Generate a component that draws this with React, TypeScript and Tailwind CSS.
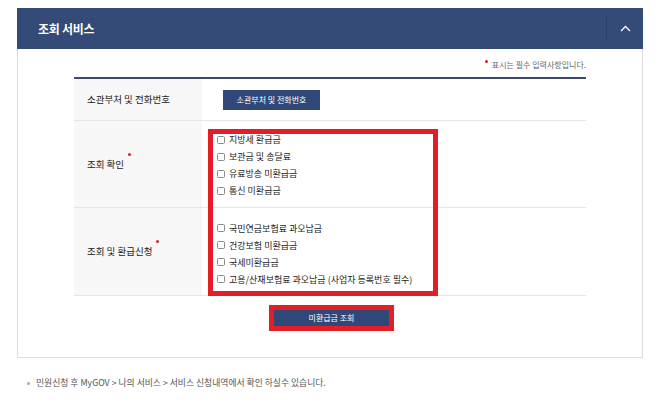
import React from "react";

const KR = { fontFamily: '"Noto Sans CJK KR", "Noto Sans", sans-serif' };

function Check({ label }: { label: string }) {
  return (
    <div className="flex items-center h-[17px]">
      <span className="w-[8px] h-[8px] border border-[#8a8a8a] rounded-[1.5px] bg-white mr-[4px] shrink-0" />
      <span className="text-[9px] text-[#222] leading-none whitespace-nowrap">{label}</span>
    </div>
  );
}

function Dot() {
  return <span className="inline-block w-[3px] h-[3px] rounded-full bg-[#d61f2b] ml-[4px] relative -top-[10px]" />;
}

export default function App() {
  return (
    <div className="w-[668px] h-[410px] bg-white pt-[8px]" style={KR}>
      <div className="ml-[17px] w-[626px]">
        {/* header */}
        <div className="h-[41px] bg-[#344a77] flex items-center">
          <div className="flex-1 pl-[21px] text-white text-[12px] font-bold tracking-[-0.3px]">조회 서비스</div>
          <div className="h-[25px] w-px bg-[#2b3f67]" />
          <div className="w-[36px] flex items-center justify-center">
            <svg width="11" height="7" viewBox="0 0 11 7" fill="none">
              <path d="M1 6 L5.5 1.5 L10 6" stroke="#ffffff" strokeWidth="1.3" />
            </svg>
          </div>
        </div>
        {/* body */}
        <div className="border border-t-0 border-[#dcdcdc] h-[309px] px-[56px] pt-[10px]">
          <div className="flex justify-end items-center h-[12px] mb-[6px] text-[8px] text-[#666]">
            <span className="inline-block w-[3px] h-[3px] rounded-full bg-[#d61f2b] mr-[4px] relative -top-[4px]" />
            <span>표시는 필수 입력사항입니다.</span>
          </div>
          <div className="relative border-t-2 border-[#3b4a6b]">
            {/* row 1 */}
            <div className="flex h-[42px] border-b border-[#e6e6e6]">
              <div className="w-[128px] bg-[#f7f7f7] flex items-center pl-[13px] text-[9.5px] text-[#222]">소관부처 및 전화번호</div>
              <div className="flex-1 flex items-center pl-[21px]">
                <div className="w-[97px] h-[20px] bg-[#2f4877] text-white text-[8px] flex items-center justify-center">소관부처 및 전화번호</div>
              </div>
            </div>
            {/* row 2 */}
            <div className="flex h-[87px] border-b border-[#e6e6e6]">
              <div className="w-[128px] bg-[#f7f7f7] flex items-center pl-[13px] text-[9.5px] text-[#222]">
                <span>조회 확인</span>
                <Dot />
              </div>
              <div className="flex-1 flex flex-col justify-center pl-[15px] pt-[2px]">
                <Check label="지방세 환급금" />
                <Check label="보관금 및 송달료" />
                <Check label="유료방송 미환급금" />
                <Check label="통신 미환급금" />
              </div>
            </div>
            {/* row 3 */}
            <div className="flex h-[88px] border-b border-[#e6e6e6]">
              <div className="w-[128px] bg-[#f7f7f7] flex items-center pl-[13px] text-[9.5px] text-[#222]">
                <span>조회 및 환급신청</span>
                <Dot />
              </div>
              <div className="flex-1 flex flex-col justify-center pl-[15px] pt-[4px]">
                <Check label="국민연금보험료 과오납금" />
                <Check label="건강보험 미환급금" />
                <Check label="국세미환급금" />
                <Check label="고용/산재보험료 과오납금 (사업자 등록번호 필수)" />
              </div>
            </div>
            {/* annotation */}
            <div className="absolute left-[134px] top-[50px] w-[230px] h-[167px] border-[5px] border-[#e41e26] pointer-events-none" />
          </div>
          <div className="flex justify-center mt-[9px]">
            <div className="border-[5px] border-[#e41e26] ml-[3px]">
              <div className="w-[115px] h-[16px] bg-[#2f4877] text-white text-[8px] flex items-center justify-center">미환급금 조회</div>
            </div>
          </div>
        </div>
      </div>
      <div className="flex items-center mt-[19px] pl-[27px] h-[12px] text-[8.8px] text-[#555]">
        <span className="inline-block w-[3px] h-[3px] rounded-full bg-[#aaa] mr-[6px]" />
        <span>민원신청 후 MyGOV &gt; 나의 서비스 &gt; 서비스 신청내역에서 확인 하실수 있습니다.</span>
      </div>
    </div>
  );
}
